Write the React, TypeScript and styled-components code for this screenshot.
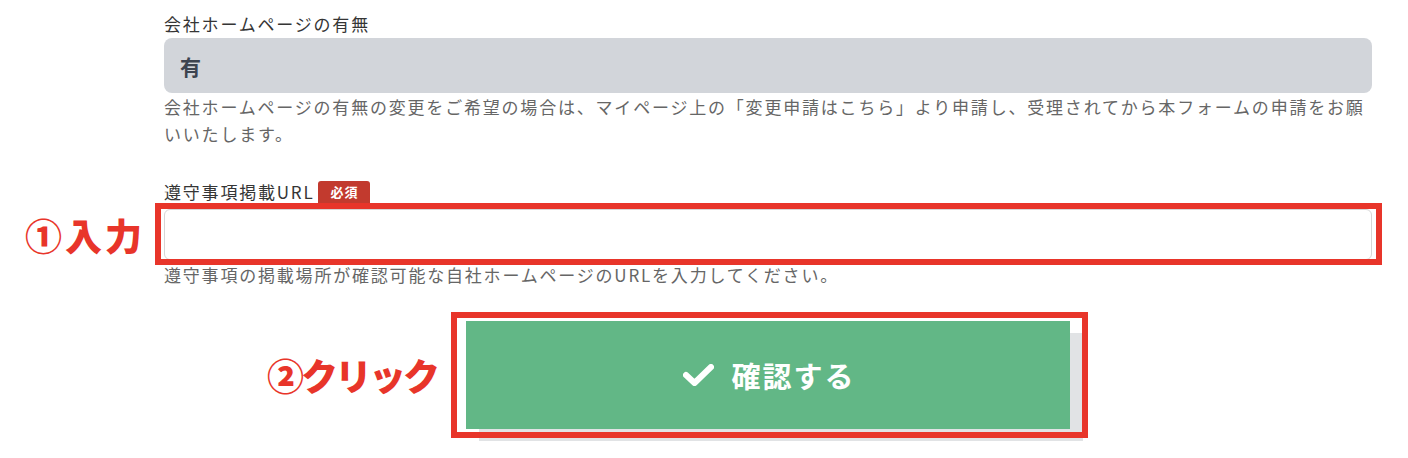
import styled, { createGlobalStyle } from 'styled-components'

const Global = createGlobalStyle`
  body {
    margin: 0;
    background: #ffffff;
    font-family: "Noto Sans CJK JP", "Noto Sans", sans-serif;
  }
`

const Page = styled.div`
  padding: 10px 0 30px 164px;
  width: 1208px;
`

const Field = styled.div<{ $top?: number }>`
  display: flex;
  flex-direction: column;
  margin-top: ${p => p.$top ?? 0}px;
`

const Label = styled.div<{ $lh?: number }>`
  display: flex;
  align-items: center;
  gap: 4px;
  font-size: 17px;
  letter-spacing: 1.8px;
  line-height: ${p => p.$lh ?? 27}px;
  color: #353535;
  margin-bottom: 1px;
`

const Required = styled.span`
  background: #c23a2e;
  color: #ffffff;
  font-size: 13px;
  font-weight: 700;
  letter-spacing: 1px;
  line-height: 22px;
  padding: 0 11px 0 12px;
  border-radius: 3px 3px 0 0;
`

const Readonly = styled.div`
  height: 55px;
  background: #d2d5da;
  border-radius: 8px;
  display: flex;
  align-items: center;
  padding-left: 16px;
  font-size: 21px;
  font-weight: 700;
  color: #3d4450;
`

const Help = styled.p`
  margin: 0;
  font-size: 17px;
  letter-spacing: 1.8px;
  line-height: 27px;
  color: #666666;
`

const Marked = styled.div<{ $l: number; $t: number; $r: number; $b: number }>`
  position: relative;
  &::after {
    content: "";
    position: absolute;
    left: -${p => p.$l}px;
    top: -${p => p.$t}px;
    right: -${p => p.$r}px;
    bottom: -${p => p.$b}px;
    border: 6px solid #e8352a;
    pointer-events: none;
  }
`

const Note = styled.span<{ $gap: number; $ls: number }>`
  position: absolute;
  top: 50%;
  right: calc(100% + ${p => p.$gap}px);
  transform: translateY(-50%);
  white-space: nowrap;
  font-size: 37px;
  font-weight: 900;
  letter-spacing: ${p => p.$ls}px;
  color: #e8352a;
`

const Input = styled.input`
  box-sizing: border-box;
  display: block;
  width: 100%;
  height: 51px;
  border: 1px solid #d6d6d6;
  border-radius: 6px;
  background: #ffffff;
  outline: none;
`

const InputWrap = styled.div`
  margin-top: 5px;
  margin-bottom: 1px;
`

const Actions = styled.div`
  display: flex;
  justify-content: center;
  margin-top: 33px;
`

const Submit = styled.button`
  width: 604px;
  height: 108px;
  border: none;
  background: #62b786;
  box-shadow: 13px 12px 0 #e1e3e5;
  color: #ffffff;
  display: flex;
  align-items: center;
  justify-content: center;
  gap: 17px;
  font-family: "Noto Sans CJK JP", sans-serif;
  font-size: 29px;
  font-weight: 700;
  letter-spacing: 2px;
  padding: 0 0 0 3px;
`

const Check = () => (
  <svg width="31" height="22" viewBox="0 0 31 22">
    <path d="M3 11 L11.5 19 L28 3" fill="none" stroke="#ffffff" strokeWidth="6" strokeLinecap="round" strokeLinejoin="round" />
  </svg>
)

const App: React.FC = () => {
  return (
    <Page>
      <Global />
      <Field>
        <Label>会社ホームページの有無</Label>
        <Readonly>有</Readonly>
        <Help>
          会社ホームページの有無の変更をご希望の場合は、マイページ上の「変更申請はこちら」より申請し、受理されてから本フォームの申請をお願いいたします。
        </Help>
      </Field>
      <Field $top={34}>
        <Label $lh={22}>
          遵守事項掲載URL<Required>必須</Required>
        </Label>
        <InputWrap>
          <Marked $l={9} $t={6} $r={10} $b={5}>
            <Note $gap={19} $ls={3}>①入力</Note>
            <Input type="text" />
          </Marked>
        </InputWrap>
        <Help>遵守事項の掲載場所が確認可能な自社ホームページのURLを入力してください。</Help>
      </Field>
      <Actions>
        <Marked $l={15} $t={9} $r={18} $b={9}>
          <Note $gap={29} $ls={-3}>②クリック</Note>
          <Submit>
            <Check />
            確認する
          </Submit>
        </Marked>
      </Actions>
    </Page>
  )
}

export default App
